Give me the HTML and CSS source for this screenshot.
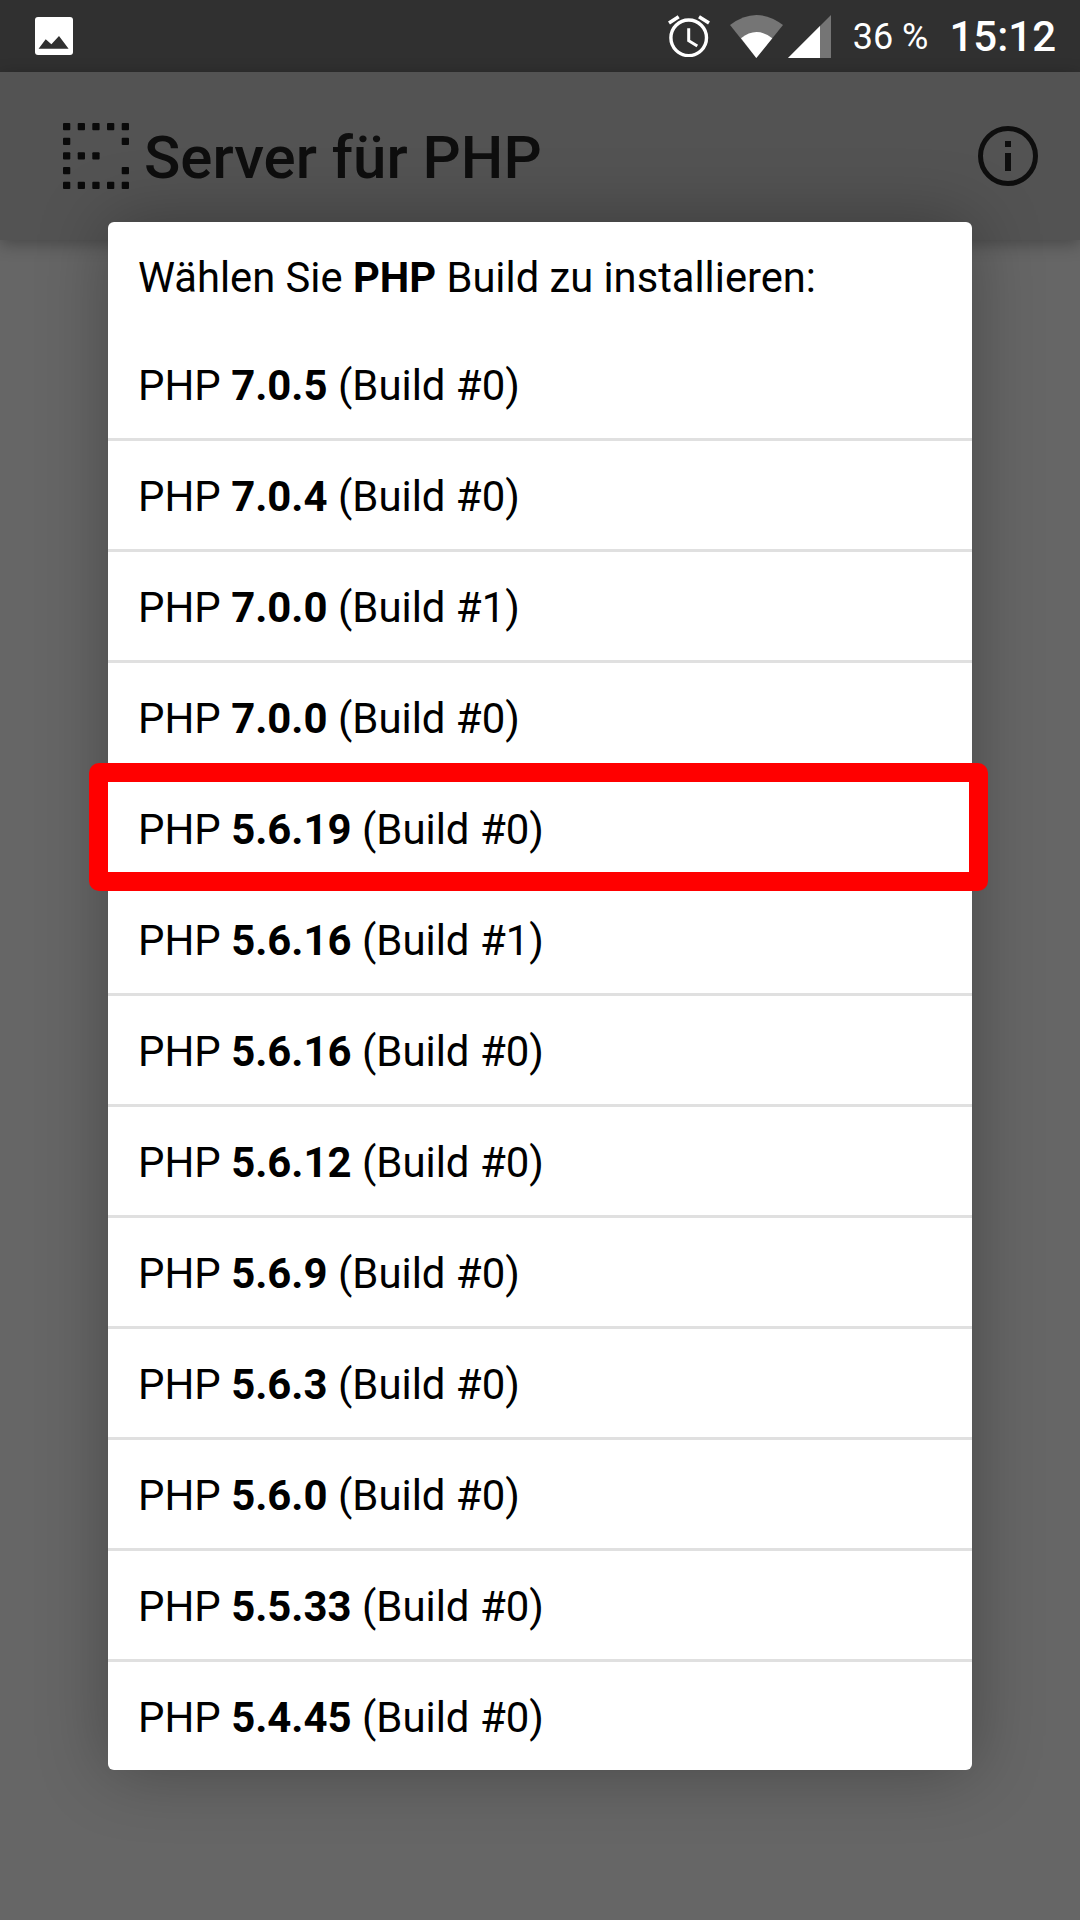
FILE: index.html
```html
<!doctype html>
<html lang="de">
<head>

    <title>Server für PHP</title>

    <link rel="stylesheet" href="styles.css">

</head>
<body>

    <!-- status bar -->
    <div class="StatusBar">
        <svg class="StatusBar-photo" width="38" height="38" viewBox="0 0 38 38">
            <rect width="38" height="38" rx="3" fill="#fff"/>
            <path d="M3.6 31.7 L10.7 22.3 L16.4 27.3 L24 19 L33.6 31.7 Z" fill="#303030"/>
        </svg>
        <div class="StatusBar-right">
            <svg class="StatusBar-alarm" width="42" height="42" viewBox="0 0 42 42">
                <circle cx="20.7" cy="22.8" r="17.8" fill="none" stroke="#fff" stroke-width="3.4"/>
                <path d="M20.7 13.3 V25.7 L29.3 31" fill="none" stroke="#fff" stroke-width="3"/>
                <path d="M1 8 L10.7 1.7 M41 8 L31 1.7" stroke="#fff" stroke-width="3.6"/>
            </svg>
            <svg class="StatusBar-wifi" width="53" height="43" viewBox="0 0 53 43">
                <path d="M0 10 Q26.5 -10 53 10 L26.3 43 Z" fill="#757575"/>
                <path d="M11 23.3 Q26.5 10.7 42.3 23.3 L26.3 43 Z" fill="#fff"/>
            </svg>
            <svg class="StatusBar-signal" width="43" height="43" viewBox="0 0 43 43">
                <path d="M0 43 L43 0 V43 Z" fill="#757575"/>
                <path d="M0 43 L32 11 V43 Z" fill="#fff"/>
            </svg>
            <span class="StatusBar-battery">36 %</span>
            <span class="StatusBar-time">15:12</span>
        </div>
    </div>

    <!-- app bar -->
    <div class="AppBar">
        <svg class="AppBar-logo" width="66" height="66" viewBox="0 0 66 66">
            <rect x="0" y="0" width="7.3" height="7.3" rx="1"/>
            <rect x="14.7" y="0" width="7.3" height="7.3" rx="1"/>
            <rect x="29.3" y="0" width="7.3" height="7.3" rx="1"/>
            <rect x="44" y="0" width="7.3" height="7.3" rx="1"/>
            <rect x="58.7" y="0" width="7.3" height="7.3" rx="1"/>
            <rect x="0" y="14.7" width="7.3" height="7.3" rx="1"/>
            <rect x="58.7" y="14.7" width="7.3" height="7.3" rx="1"/>
            <rect x="0" y="29.3" width="7.3" height="7.3" rx="1"/>
            <rect x="14.7" y="29.3" width="7.3" height="7.3" rx="1"/>
            <rect x="29.3" y="29.3" width="7.3" height="7.3" rx="1"/>
            <rect x="0" y="44" width="7.3" height="7.3" rx="1"/>
            <rect x="58.7" y="44" width="7.3" height="7.3" rx="1"/>
            <rect x="0" y="58.7" width="7.3" height="7.3" rx="1"/>
            <rect x="14.7" y="58.7" width="7.3" height="7.3" rx="1"/>
            <rect x="29.3" y="58.7" width="7.3" height="7.3" rx="1"/>
            <rect x="44" y="58.7" width="7.3" height="7.3" rx="1"/>
            <rect x="58.7" y="58.7" width="7.3" height="7.3" rx="1"/>
        </svg>
        <span class="AppBar-title">Server für PHP</span>
        <svg class="AppBar-info" width="60" height="60" viewBox="0 0 60 60">
            <circle cx="30" cy="30" r="27.5" fill="none" stroke="#0e0e0e" stroke-width="5"/>
            <rect x="27" y="15" width="6" height="6" fill="#0e0e0e"/>
            <rect x="27" y="27" width="6" height="18" fill="#0e0e0e"/>
        </svg>
    </div>

    <!-- build dialog -->
    <div class="Dialog">
        <div class="Dialog-title">Wählen Sie <b>PHP</b> Build zu installieren:</div>
        <div class="Row">PHP <b>7.0.5</b> (Build #0)</div>
        <div class="Row">PHP <b>7.0.4</b> (Build #0)</div>
        <div class="Row">PHP <b>7.0.0</b> (Build #1)</div>
        <div class="Row">PHP <b>7.0.0</b> (Build #0)</div>
        <div class="Row Row-marked">PHP <b>5.6.19</b> (Build #0)</div>
        <div class="Row">PHP <b>5.6.16</b> (Build #1)</div>
        <div class="Row">PHP <b>5.6.16</b> (Build #0)</div>
        <div class="Row">PHP <b>5.6.12</b> (Build #0)</div>
        <div class="Row">PHP <b>5.6.9</b> (Build #0)</div>
        <div class="Row">PHP <b>5.6.3</b> (Build #0)</div>
        <div class="Row">PHP <b>5.6.0</b> (Build #0)</div>
        <div class="Row">PHP <b>5.5.33</b> (Build #0)</div>
        <div class="Row Row-last">PHP <b>5.4.45</b> (Build #0)</div>
    </div>

</body>
</html>
```

FILE: styles.css
```css
*, *:before, *:after {
    box-sizing: border-box;
    margin: 0;
    padding: 0;
}

html, body {
    height: 1920px;
    overflow: hidden;
}

body {
    display: flex;
    flex-direction: column;
    background: #666;
    font-family: Roboto, "Liberation Sans", sans-serif;
    color: #000;
}

.StatusBar {
    display: flex;
    align-items: center;
    justify-content: space-between;
    height: 72px;
    padding: 0 24px 0 35px;
    background: #303030;
    color: #fff;
}

.StatusBar-right {
    display: flex;
    align-items: center;
}

.StatusBar-alarm {
    margin-right: 20px;
}

.StatusBar-wifi {
    margin-right: 5px;
}

.StatusBar-signal {
    margin-right: 22px;
}

.StatusBar-battery {
    margin: 2px 21px 0 0;
    font-size: 36px;
}

.StatusBar-time {
    font-size: 42px;
    font-weight: 500;
}

.AppBar {
    display: flex;
    align-items: center;
    height: 168px;
    padding: 0 42px 0 63px;
    background: #535353;
    box-shadow: 0 4px 16px rgba(0, 0, 0, 0.3);
}

.AppBar-logo {
    fill: #0a0a0a;
}

.AppBar-title {
    flex: 1;
    margin: 2px 0 0 15px;
    color: #0e0e0e;
    font-size: 60px;
    font-weight: 500;
}

.Dialog {
    position: absolute;
    top: 222px;
    left: 108px;
    width: 864px;
    height: 1548px;
    background: #fff;
    border-radius: 6px;
    box-shadow: 0 0 70px rgba(0, 0, 0, 0.3);
    font-size: 41.9px;
}

.Dialog-title {
    height: 108px;
    padding: 0 30px;
    font-size: 41.7px;
    line-height: 112px;
}

.Row {
    height: 111px;
    padding: 0 30px;
    border-bottom: 3px solid #e0e0e0;
    line-height: 111px;
}

.Row-last {
    border-bottom: 0;
}

.Row-marked {
    position: relative;
}

.Row-marked:after {
    content: "";
    position: absolute;
    top: -11px;
    left: -19px;
    right: -16px;
    height: 128px;
    border: 19px solid #f00;
    border-radius: 10px;
}
```
